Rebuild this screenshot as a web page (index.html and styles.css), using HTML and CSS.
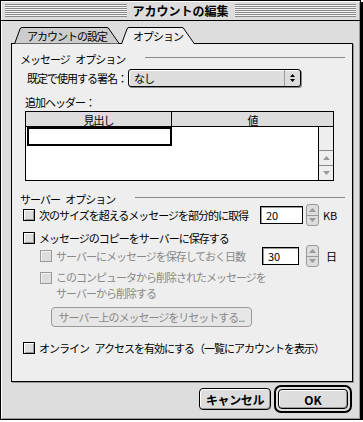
FILE: index.html
```html
<!DOCTYPE html>
<html lang="ja">
<head>
    <meta charset="UTF-8">
    <title>アカウントの編集</title>
    <link rel="stylesheet" href="styles.css">
</head>
<body>
<div class="window">
    <!-- Title bar -->
    <div class="titlebar">
        <span class="stripes"></span>
        <span class="title">アカウントの編集</span>
        <span class="stripes"></span>
    </div>

    <div class="main">
        <!-- Tabs -->
        <div class="tabs">
            <div class="tab tab-back">
                <svg class="tab-shape" width="106" height="17" viewBox="0 0 106 17"><path d="M0.5 17 L6 2 Q6.5 0.5 8 0.5 L93 0.5 Q94.5 0.5 95 2 L105.5 17 Z" fill="#cccccc" stroke="#000" stroke-width="1"/></svg>
                <span class="tab-label">アカウントの設定</span>
            </div>
            <div class="tab tab-front">
                <svg class="tab-shape" width="74" height="17" viewBox="0 0 74 17"><path d="M0.5 17 L6 2 Q6.5 0.5 8 0.5 L61 0.5 Q62.5 0.5 63 2 L73.5 17" fill="#eeeeee" stroke="#000" stroke-width="1"/></svg>
                <span class="tab-label">オプション</span>
            </div>
        </div>

        <div class="panel">
            <div class="group-head">
                <span class="group-title group-msg">メッセージ オプション</span>
                <span class="rule"></span>
            </div>

            <div class="sig-row">
                <span class="sig-label">既定で使用する署名：</span>
                <div class="popup">
                    <span class="popup-value">なし</span>
                    <span class="popup-arrows">
                        <svg width="5" height="8" viewBox="0 0 5 8"><path d="M2.5 0 L5 3 H0 Z M0 5 H5 L2.5 8 Z" fill="#000"/></svg>
                    </span>
                </div>
            </div>

            <div class="field-label">追加ヘッダー：</div>
            <div class="table">
                <div class="thead">
                    <div class="th th-name">見出し</div>
                    <div class="th th-value">値</div>
                </div>
                <div class="tbody">
                    <div class="rows"><div class="edit-cell"></div></div>
                    <div class="vscroll">
                        <div class="vs-track"></div>
                        <div class="vs-btn"><svg width="7" height="4" viewBox="0 0 7 4"><path d="M3.5 0 L7 4 H0 Z" fill="#999"/></svg></div>
                        <div class="vs-btn"><svg width="7" height="4" viewBox="0 0 7 4"><path d="M0 0 H7 L3.5 4 Z" fill="#999"/></svg></div>
                    </div>
                </div>
            </div>

            <div class="group-head group-server">
                <span class="group-title group-srv">サーバー オプション</span>
                <span class="rule"></span>
            </div>

            <div class="opt-row row-partial">
                <span class="cb"></span>
                <span class="cb-label">次のサイズを超えるメッセージを部分的に取得</span>
                <div class="spin">
                    <span class="num num-kb">20</span>
                    <span class="stepper">
                        <span class="step"><svg width="7" height="4" viewBox="0 0 7 4"><path d="M3.5 0 L7 4 H0 Z" fill="#999"/></svg></span>
                        <span class="step"><svg width="7" height="4" viewBox="0 0 7 4"><path d="M0 0 H7 L3.5 4 Z" fill="#999"/></svg></span>
                    </span>
                    <span class="unit unit-kb">KB</span>
                </div>
            </div>

            <div class="opt-row row-copy">
                <span class="cb"></span>
                <span class="cb-label">メッセージのコピーをサーバーに保存する</span>
            </div>

            <div class="opt-row sub disabled row-days">
                <span class="cb"></span>
                <span class="cb-label">サーバーにメッセージを保存しておく日数</span>
                <div class="spin">
                    <span class="num num-days">30</span>
                    <span class="stepper stepper-days">
                        <span class="step"><svg width="7" height="4" viewBox="0 0 7 4"><path d="M3.5 0 L7 4 H0 Z" fill="#999"/></svg></span>
                        <span class="step"><svg width="7" height="4" viewBox="0 0 7 4"><path d="M0 0 H7 L3.5 4 Z" fill="#999"/></svg></span>
                    </span>
                    <span class="unit unit-days">日</span>
                </div>
            </div>

            <div class="opt-row sub disabled row-delete">
                <span class="cb"></span>
                <span class="cb-label two-line">このコンピュータから削除されたメッセージを<br>サーバーから削除する</span>
            </div>

            <button class="reset-btn" disabled>サーバー上のメッセージをリセットする...</button>

            <div class="opt-row row-online">
                <span class="cb"></span>
                <span class="cb-label">オンライン アクセスを有効にする（一覧にアカウントを表示）</span>
            </div>
        </div>

        <!-- Dialog buttons -->
        <div class="actions">
            <button class="btn btn-cancel">キャンセル</button>
            <div class="ring"><button class="btn btn-ok">OK</button></div>
        </div>
    </div>
</div>
</body>
</html>
```

FILE: styles.css
```css
* {
    box-sizing: border-box;
}
body {
    margin: 0;
    font-family: "Noto Sans CJK JP", "Noto Sans", sans-serif;
    font-size: 11px;
    line-height: 14px;
    letter-spacing: -1px;
    word-spacing: 4px;
    color: #000;
    background: #fff;
}
.window {
    width: 361px;
    height: 420px;
    border: 1px solid #000;
    background: #dddddd;
    box-shadow: 2px 2px 0 #000, inset 1px 1px 0 #fff, inset -1px -1px 0 #999;
}

/* Title bar */
.titlebar {
    height: 20px;
    border-bottom: 1px solid #000;
    display: flex;
    align-items: center;
    gap: 5px;
    padding: 0 4px;
}
.stripes {
    flex: 1;
    height: 13px;
    background: repeating-linear-gradient(to bottom, #888 0 1px, #f4f4f4 1px 2px);
}
.title {
    font-size: 12px;
    font-weight: bold;
    letter-spacing: 0;
    padding: 0 1px;
}

.main {
    padding: 6px 7px 0 10px;
}

/* Tabs */
.tabs {
    display: flex;
    height: 17px;
    margin-bottom: -1px;
    padding-left: 3px;
    position: relative;
    z-index: 1;
}
.tab {
    position: relative;
    height: 17px;
    display: flex;
    justify-content: center;
    padding-top: 2px;
}
.tab-shape {
    position: absolute;
    left: 0;
    top: 0;
}
.tab-label {
    position: relative;
}
.tab-back {
    width: 106px;
}
.tab-front {
    width: 74px;
    margin-left: 1px;
}

/* Panel */
.panel {
    height: 339px;
    border: 1px solid #000;
    background: #eeeeee;
    box-shadow: 1px 1px 0 #999;
    padding: 0 7px 0 8px;
}
.group-head {
    display: flex;
    height: 14px;
    margin-top: 8px;
}
.group-server {
    margin-top: 11px;
}
.group-msg {
    width: 125px;
}
.group-srv {
    width: 115px;
}
.rule {
    flex: 1;
    height: 1px;
    margin-top: 5px;
    background: #888;
}

.sig-row {
    display: flex;
    align-items: center;
    margin-top: 3px;
    padding-left: 7px;
}
.sig-label {
    width: 101px;
}
.popup {
    width: 173px;
    height: 18px;
    border: 1px solid #000;
    border-radius: 3px;
    background: #dddddd;
    display: flex;
    box-shadow: 1px 1px 0 #888, inset 1px 1px 0 #fff;
}
.popup-value {
    flex: 1;
    padding-left: 5px;
    line-height: 16px;
}
.popup-arrows {
    width: 16px;
    border-left: 1px solid #999;
    display: flex;
    align-items: center;
    justify-content: center;
}

.field-label {
    margin-top: 8px;
    padding-left: 5px;
}
.table {
    margin: 2px 0 0 5px;
    width: 309px;
    height: 70px;
    border: 1px solid #000;
    background: #fff;
    display: flex;
    flex-direction: column;
}
.thead {
    display: flex;
    height: 15px;
    background: #dddddd;
    border-bottom: 1px solid #000;
}
.th {
    text-align: center;
    line-height: 14px;
    padding-top: 1px;
}
.th-name {
    width: 146px;
    border-right: 1px solid #000;
}
.th-value {
    flex: 1;
}
.tbody {
    flex: 1;
    display: flex;
}
.rows {
    flex: 1;
}
.edit-cell {
    width: 145px;
    height: 19px;
    margin-left: 1px;
    border: 2px solid #000;
}
.vscroll {
    width: 15px;
    border-left: 1px solid #000;
    background: #eeeeee;
    display: flex;
    flex-direction: column;
}
.vs-track {
    flex: 1;
}
.vs-btn {
    height: 15px;
    border-top: 1px solid #888;
    display: flex;
    align-items: center;
    justify-content: center;
}

/* Option rows */
.opt-row {
    display: flex;
    align-items: center;
    padding-left: 3px;
}
.opt-row.sub {
    padding-left: 20px;
}
.disabled {
    color: #888;
}
.cb {
    flex: none;
    width: 12px;
    height: 12px;
    margin-right: 4px;
    border: 1px solid #000;
    background: #dddddd;
    box-shadow: inset 1px 1px 0 #fff, inset -1px -1px 0 #999;
}
.disabled .cb {
    border-color: #999;
    box-shadow: inset 1px 1px 0 #f4f4f4;
}
.cb-label {
    flex: 1;
}
.row-partial {
    height: 18px;
}
.row-copy {
    height: 14px;
    margin-top: 7px;
}
.row-days {
    height: 18px;
    margin-top: 2px;
}
.row-delete {
    align-items: flex-start;
    margin-top: 4px;
}
.row-delete .cb {
    margin-top: 3px;
}
.two-line {
    line-height: 16px;
}
.row-online {
    height: 14px;
    margin-top: 14px;
}

.spin {
    display: flex;
    align-items: center;
}
.num {
    height: 18px;
    border: 1px solid #000;
    background: #fff;
    box-shadow: inset 1px 1px 0 #999;
    padding-left: 5px;
    line-height: 16px;
    color: #000;
    letter-spacing: 0;
}
.num-kb {
    width: 43px;
    margin-right: 3px;
}
.num-days {
    width: 37px;
    margin-right: 7px;
}
.stepper {
    width: 13px;
    height: 22px;
    border: 1px solid #999;
    border-radius: 3px;
    background: #dddddd;
    display: flex;
    flex-direction: column;
}
.step {
    flex: 1;
    display: flex;
    align-items: center;
    justify-content: center;
}
.step + .step {
    border-top: 1px solid #999;
}
.unit {
    color: #000;
    letter-spacing: 0;
}
.unit-kb {
    width: 22px;
    margin-left: 4px;
}
.unit-days {
    width: 19px;
    margin-left: 7px;
}

.reset-btn {
    display: block;
    width: 201px;
    height: 20px;
    margin: 6px 0 0 31px;
    padding: 0;
    border: 1px solid #999;
    border-radius: 4px;
    background: #e6e6e6;
    color: #888;
    font: inherit;
    letter-spacing: -1px;
}

/* Dialog buttons */
.actions {
    display: flex;
    justify-content: flex-end;
    align-items: center;
    gap: 3px;
    margin-top: 3px;
    padding-right: 1px;
}
.btn {
    height: 22px;
    padding: 0;
    border: 1px solid #000;
    border-radius: 4px;
    background: #dddddd;
    box-shadow: inset 1px 1px 0 #fff, inset -1px -1px 0 #999;
    font-family: "Noto Sans CJK JP", "Noto Sans", sans-serif;
    font-size: 12px;
    font-weight: bold;
    letter-spacing: -0.4px;
    color: #000;
}
.btn-cancel {
    width: 72px;
}
.ring {
    width: 78px;
    height: 28px;
    border: 2px solid #000;
    border-radius: 7px;
    padding: 2px;
}
.btn-ok {
    width: 100%;
    height: 100%;
    letter-spacing: 0;
}
```
